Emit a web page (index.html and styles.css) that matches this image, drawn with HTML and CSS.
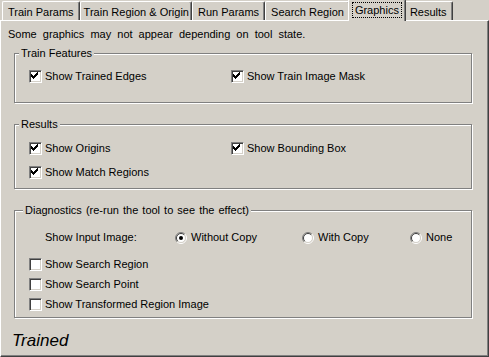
FILE: index.html
```html
<!DOCTYPE html>
<html lang="en">
<head>
    <meta charset="UTF-8">
    <title>Graphics</title>
    <link rel="stylesheet" href="styles.css">
</head>
<body>
    <div class="tabs">
        <div class="tab">Train Params</div>
        <div class="tab tight">Train Region &amp; Origin</div>
        <div class="tab">Run Params</div>
        <div class="tab">Search Region</div>
        <div class="tab active"><span class="focus">Graphics</span></div>
        <div class="tab">Results</div>
    </div>

    <div class="panel">
        <p class="note">Some graphics may not appear depending on tool state.</p>

        <div class="group g1">
            <div class="group-title">Train Features</div>
            <div class="cols">
                <label class="check"><span class="box"><svg width="9" height="9" viewBox="0 0 9 9"><path d="M1 3h1v3h-1zM2 4h1v3h-1zM3 5h1v3h-1zM4 4h1v3h-1zM5 3h1v3h-1zM6 2h1v3h-1zM7 1h1v3h-1z"/></svg></span>Show Trained Edges</label>
                <label class="check"><span class="box"><svg width="9" height="9" viewBox="0 0 9 9"><path d="M1 3h1v3h-1zM2 4h1v3h-1zM3 5h1v3h-1zM4 4h1v3h-1zM5 3h1v3h-1zM6 2h1v3h-1zM7 1h1v3h-1z"/></svg></span>Show Train Image Mask</label>
            </div>
        </div>

        <div class="group g2">
            <div class="group-title">Results</div>
            <div class="cols">
                <label class="check"><span class="box"><svg width="9" height="9" viewBox="0 0 9 9"><path d="M1 3h1v3h-1zM2 4h1v3h-1zM3 5h1v3h-1zM4 4h1v3h-1zM5 3h1v3h-1zM6 2h1v3h-1zM7 1h1v3h-1z"/></svg></span>Show Origins</label>
                <label class="check"><span class="box"><svg width="9" height="9" viewBox="0 0 9 9"><path d="M1 3h1v3h-1zM2 4h1v3h-1zM3 5h1v3h-1zM4 4h1v3h-1zM5 3h1v3h-1zM6 2h1v3h-1zM7 1h1v3h-1z"/></svg></span>Show Bounding Box</label>
                <label class="check"><span class="box"><svg width="9" height="9" viewBox="0 0 9 9"><path d="M1 3h1v3h-1zM2 4h1v3h-1zM3 5h1v3h-1zM4 4h1v3h-1zM5 3h1v3h-1zM6 2h1v3h-1zM7 1h1v3h-1z"/></svg></span>Show Match Regions</label>
            </div>
        </div>

        <div class="group g3">
            <div class="group-title">Diagnostics (re-run the tool to see the effect)</div>
            <div class="radio-row">
                <span>Show Input Image:</span>
                <label class="radio"><svg width="12" height="12" viewBox="0 0 12 12"><circle cx="6" cy="6" r="4.5" fill="#fff"/><path d="M2.1 9.9A5.5 5.5 0 0 1 9.9 2.1" fill="none" stroke="#808080"/><path d="M9.9 2.1A5.5 5.5 0 0 1 2.1 9.9" fill="none" stroke="#fff"/><path d="M2.8 9.2A4.5 4.5 0 0 1 9.2 2.8" fill="none" stroke="#404040"/><path d="M9.2 2.8A4.5 4.5 0 0 1 2.8 9.2" fill="none" stroke="#d4d0c8"/><circle cx="6" cy="6" r="2"/></svg>Without Copy</label>
                <label class="radio"><svg width="12" height="12" viewBox="0 0 12 12"><circle cx="6" cy="6" r="4.5" fill="#fff"/><path d="M2.1 9.9A5.5 5.5 0 0 1 9.9 2.1" fill="none" stroke="#808080"/><path d="M9.9 2.1A5.5 5.5 0 0 1 2.1 9.9" fill="none" stroke="#fff"/><path d="M2.8 9.2A4.5 4.5 0 0 1 9.2 2.8" fill="none" stroke="#404040"/><path d="M9.2 2.8A4.5 4.5 0 0 1 2.8 9.2" fill="none" stroke="#d4d0c8"/></svg>With Copy</label>
                <label class="radio"><svg width="12" height="12" viewBox="0 0 12 12"><circle cx="6" cy="6" r="4.5" fill="#fff"/><path d="M2.1 9.9A5.5 5.5 0 0 1 9.9 2.1" fill="none" stroke="#808080"/><path d="M9.9 2.1A5.5 5.5 0 0 1 2.1 9.9" fill="none" stroke="#fff"/><path d="M2.8 9.2A4.5 4.5 0 0 1 9.2 2.8" fill="none" stroke="#404040"/><path d="M9.2 2.8A4.5 4.5 0 0 1 2.8 9.2" fill="none" stroke="#d4d0c8"/></svg>None</label>
            </div>
            <div class="list">
                <label class="check"><span class="box"></span>Show Search Region</label>
                <label class="check"><span class="box"></span>Show Search Point</label>
                <label class="check"><span class="box"></span>Show Transformed Region Image</label>
            </div>
        </div>

        <div class="status">Trained</div>
    </div>
</body>
</html>
```

FILE: styles.css
```css
body {
    margin: 0;
    width: 489px;
    height: 357px;
    background-color: #d4d0c8;
    font-family: "Liberation Sans", Arial, sans-serif;
    font-size: 11px;
    line-height: 13px;
    color: #000;
    overflow: hidden;
}

/* tab strip */
.tabs {
    display: flex;
    align-items: flex-end;
    height: 20px;
    padding-left: 2px;
}
.tab {
    height: 14px;
    padding: 4px 5px 0 5px;
    border-top: 1px solid #fff;
    border-left: 1px solid #fff;
    border-right: 1px solid #404040;
    border-radius: 2px 2px 0 0;
    box-shadow: inset -1px 0 0 #808080;
    white-space: nowrap;
}
.tab.tight {
    padding: 4px 2px 0 3px;
}
.tab.active {
    position: relative;
    z-index: 1;
    height: 19px;
    padding: 2px 3px 0 3px;
    margin: 0 -2px -1px -2px;
    background-color: #d4d0c8;
}
.focus {
    display: inline-block;
    padding: 1px 2px 0 2px;
    border: 1px dotted #000;
}

/* page */
.panel {
    height: 328px;
    padding: 7px 7px 0 7px;
    border-top: 1px solid #fff;
    border-left: 1px solid #fff;
    border-right: 1px solid #404040;
    border-bottom: 1px solid #404040;
    box-shadow: inset -1px -1px 0 #808080;
}
.note {
    margin: 0;
    word-spacing: 3px;
}

/* group boxes */
.group {
    margin: 12px 9px 0 6px;
    padding: 0 0 0 14px;
    border: 1px solid #808080;
    box-shadow: inset 1px 1px 0 #fff, 1px 1px 0 #fff;
}
.group-title {
    width: fit-content;
    margin: -7px 0 0 -10px;
    padding: 0 2px;
    background-color: #d4d0c8;
}
.g1 { padding-bottom: 19px; }
.g1 .cols { margin-top: 10px; }
.g2 { margin-top: 21px; padding-bottom: 9px; }
.g2 .cols { margin-top: 11px; }
.g3 { margin-top: 21px; padding-bottom: 6px; }
.g3 .group-title {
    margin-left: -6px;
    word-spacing: 1px;
}

.cols {
    display: grid;
    grid-template-columns: 202px 1fr;
    row-gap: 11px;
}

/* checkboxes and radios */
.check {
    display: flex;
    align-items: center;
    gap: 3px;
    height: 13px;
}
.box {
    display: flex;
    width: 9px;
    height: 9px;
    padding: 1px;
    border: 1px solid;
    border-color: #808080 #fff #fff #808080;
    box-shadow: inset 1px 1px 0 #404040, inset -1px -1px 0 #d4d0c8;
    background-color: #fff;
}
.box svg {
    display: block;
    margin: -1px;
}

.radio-row {
    display: grid;
    grid-template-columns: 130px 127px 108px 1fr;
    align-items: center;
    margin: 14px 0 0 16px;
    height: 13px;
}
.radio {
    display: flex;
    align-items: center;
    gap: 4px;
}
.radio svg {
    display: block;
}

.list {
    display: flex;
    flex-direction: column;
    gap: 7px;
    margin-top: 14px;
}

.status {
    margin: 13px 0 0 4px;
    font-size: 17px;
    line-height: 20px;
    font-style: italic;
}
```
